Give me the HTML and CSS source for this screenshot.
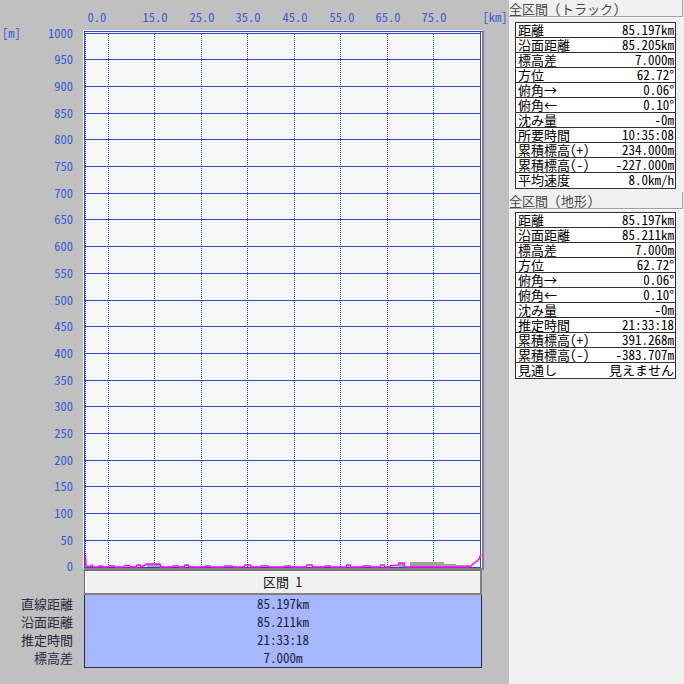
FILE: index.html
```html
<!DOCTYPE html>
<html lang="ja">
<head>
<meta charset="utf-8">
<title>断面図</title>
<link rel="stylesheet" href="styles.css">
</head>
<body>
<div class="app">
  <div class="chart-pane">
    <div class="y-axis">
      <div class="y-tick first"><span>[m]</span><span>1000</span></div>
      <div class="y-tick">950</div>
      <div class="y-tick">900</div>
      <div class="y-tick">850</div>
      <div class="y-tick">800</div>
      <div class="y-tick">750</div>
      <div class="y-tick">700</div>
      <div class="y-tick">650</div>
      <div class="y-tick">600</div>
      <div class="y-tick">550</div>
      <div class="y-tick">500</div>
      <div class="y-tick">450</div>
      <div class="y-tick">400</div>
      <div class="y-tick">350</div>
      <div class="y-tick">300</div>
      <div class="y-tick">250</div>
      <div class="y-tick">200</div>
      <div class="y-tick">150</div>
      <div class="y-tick">100</div>
      <div class="y-tick">50</div>
      <div class="y-tick">0</div>
    </div>
    <div class="x-axis">
      <span class="x-tick" style="left:14px">0.0</span>
      <span class="x-tick" style="left:72px">15.0</span>
      <span class="x-tick" style="left:119px">25.0</span>
      <span class="x-tick" style="left:165px">35.0</span>
      <span class="x-tick" style="left:212px">45.0</span>
      <span class="x-tick" style="left:259px">55.0</span>
      <span class="x-tick" style="left:305px">65.0</span>
      <span class="x-tick" style="left:351px">75.0</span>
      <span class="x-tick" style="left:412px">[km]</span>
    </div>
    <div class="plot">
      <svg width="398" height="537" viewBox="0 0 398 537">
        <g stroke="#2a48c8" stroke-width="1" fill="none">
          <line x1="0" y1="0.5" x2="398" y2="0.5"/>
          <line x1="0.5" y1="0" x2="0.5" y2="537"/>
          <line x1="396.5" y1="0" x2="396.5" y2="537"/>
          <line x1="0" y1="2.5" x2="397" y2="2.5"/>
          <line x1="0" y1="28.5" x2="397" y2="28.5"/>
          <line x1="0" y1="55.5" x2="397" y2="55.5"/>
          <line x1="0" y1="82.5" x2="397" y2="82.5"/>
          <line x1="0" y1="108.5" x2="397" y2="108.5"/>
          <line x1="0" y1="135.5" x2="397" y2="135.5"/>
          <line x1="0" y1="162.5" x2="397" y2="162.5"/>
          <line x1="0" y1="188.5" x2="397" y2="188.5"/>
          <line x1="0" y1="215.5" x2="397" y2="215.5"/>
          <line x1="0" y1="242.5" x2="397" y2="242.5"/>
          <line x1="0" y1="269.5" x2="397" y2="269.5"/>
          <line x1="0" y1="295.5" x2="397" y2="295.5"/>
          <line x1="0" y1="322.5" x2="397" y2="322.5"/>
          <line x1="0" y1="349.5" x2="397" y2="349.5"/>
          <line x1="0" y1="375.5" x2="397" y2="375.5"/>
          <line x1="0" y1="402.5" x2="397" y2="402.5"/>
          <line x1="0" y1="429.5" x2="397" y2="429.5"/>
          <line x1="0" y1="455.5" x2="397" y2="455.5"/>
          <line x1="0" y1="482.5" x2="397" y2="482.5"/>
          <line x1="0" y1="509.5" x2="397" y2="509.5"/>
          <line x1="0" y1="536.5" x2="397" y2="536.5"/>
        </g>
        <g stroke="#2a48c8" stroke-width="1" stroke-dasharray="1 1" fill="none">
          <line x1="1.5" y1="0" x2="1.5" y2="537"/>
          <line x1="24.5" y1="3" x2="24.5" y2="536"/>
          <line x1="70.5" y1="3" x2="70.5" y2="536"/>
          <line x1="117.5" y1="3" x2="117.5" y2="536"/>
          <line x1="163.5" y1="3" x2="163.5" y2="536"/>
          <line x1="210.5" y1="3" x2="210.5" y2="536"/>
          <line x1="256.5" y1="3" x2="256.5" y2="536"/>
          <line x1="303.5" y1="3" x2="303.5" y2="536"/>
          <line x1="349.5" y1="3" x2="349.5" y2="536"/>
        </g>
        <g fill="#a0a0a0">
          <rect x="63" y="533" width="13" height="3"/>
          <rect x="315" y="532" width="5" height="4"/>
          <polygon points="326,536 326,531 360,531 360,533 372,533 372,534 386,534 386,536"/>
        </g>
        <polyline fill="none" stroke="#ff00ff" stroke-width="1.5" points="1,526 1.5,526 2,535 6,536 8,534 9,536 14,536 15,535 18,535 19,536 24,536 25,535 30,535 31,536 40,536 41,534.5 45,534.5 46,536 52,536 53,534 56,534 57,536 63,533 76,533 77,536 88,536 89,535 94,535 95,536 100,536 101,534 104,534 105,536 120,536 121,535 126,535 127,536 140,536 141,535 148,535 149,536 160,536 161,534 166,534 167,536 176,536 177,535 184,535 185,536 200,536 201,535 206,535 207,536 222,536 223,534 228,534 229,536 240,536 241,535 246,535 247,536 262,536 263,534 266,534 267,536 278,536 279,535 286,535 287,536 296,536 297,534 300,534 301,536 306,536 307,534.5 314,534.5 315,532 320,532 321,536 386,536 388,534 390,532 393,530 395,528 397,523"/>
      </svg>
    </div>
    <div class="sec-labels">
      <div>直線距離</div>
      <div>沿面距離</div>
      <div>推定時間</div>
      <div>標高差</div>
    </div>
    <div class="sec-table">
      <div class="sec-head">区間 1</div>
      <div class="sec-body">
        <div>85.197km</div>
        <div>85.211km</div>
        <div>21:33:18</div>
        <div>7.000m</div>
      </div>
    </div>
  </div>
  <div class="info-pane">
    <div class="info-head">全区間 (トラック)</div>
    <div class="info-table">
      <div class="info-row"><span>距離</span><span>85.197km</span></div>
      <div class="info-row"><span>沿面距離</span><span>85.205km</span></div>
      <div class="info-row"><span>標高差</span><span>7.000m</span></div>
      <div class="info-row"><span>方位</span><span>62.72°</span></div>
      <div class="info-row"><span>俯角→</span><span>0.06°</span></div>
      <div class="info-row"><span>俯角←</span><span>0.10°</span></div>
      <div class="info-row"><span>沈み量</span><span>-0m</span></div>
      <div class="info-row"><span>所要時間</span><span>10:35:08</span></div>
      <div class="info-row"><span>累積標高(+)</span><span>234.000m</span></div>
      <div class="info-row"><span>累積標高(-)</span><span>-227.000m</span></div>
      <div class="info-row"><span>平均速度</span><span>8.0km/h</span></div>
    </div>
    <div class="info-head second">全区間 (地形)</div>
    <div class="info-table">
      <div class="info-row"><span>距離</span><span>85.197km</span></div>
      <div class="info-row"><span>沿面距離</span><span>85.211km</span></div>
      <div class="info-row"><span>標高差</span><span>7.000m</span></div>
      <div class="info-row"><span>方位</span><span>62.72°</span></div>
      <div class="info-row"><span>俯角→</span><span>0.06°</span></div>
      <div class="info-row"><span>俯角←</span><span>0.10°</span></div>
      <div class="info-row"><span>沈み量</span><span>-0m</span></div>
      <div class="info-row"><span>推定時間</span><span>21:33:18</span></div>
      <div class="info-row"><span>累積標高(+)</span><span>391.268m</span></div>
      <div class="info-row"><span>累積標高(-)</span><span>-383.707m</span></div>
      <div class="info-row"><span>見通し</span><span>見えません</span></div>
    </div>
  </div>
</div>
</body>
</html>
```

FILE: styles.css
```css
* { box-sizing: border-box; }

html, body {
  margin: 0;
  padding: 0;
  width: 684px;
  height: 684px;
  overflow: hidden;
  font-family: "Noto Sans Mono CJK JP", "Noto Sans CJK JP", "DejaVu Sans Mono", monospace;
  font-size: 13px;
}

.app {
  display: flex;
  width: 684px;
  height: 684px;
}

.chart-pane {
  width: 509px;
  height: 684px;
  background: #c0c0c0;
  display: grid;
  grid-template-columns: 83px 401px 25px;
  grid-template-rows: 30px 540px 1fr;
}

.y-axis {
  grid-column: 1;
  grid-row: 1 / 3;
  padding-top: 19.65px;
  color: #3a58d8;
  font-size: 12.5px;
}

.y-tick {
  height: 26.7px;
  line-height: 26.7px;
  display: flex;
  justify-content: flex-end;
  padding-right: 10px;
}

.y-tick.first {
  justify-content: space-between;
  padding-left: 2px;
}

.x-axis {
  grid-column: 2 / 4;
  grid-row: 1;
  position: relative;
  color: #3a58d8;
  font-size: 12.5px;
}

.x-tick {
  position: absolute;
  top: 8px;
  line-height: 18px;
  transform: translateX(-50%);
  white-space: nowrap;
}

.plot {
  grid-column: 2;
  grid-row: 2;
  background: #f7f7f7;
  border-left: 1px solid #ffffff;
  border-top: 1px solid #ffffff;
  border-right: 2px solid #808080;
  border-bottom: 2px solid #808080;
}

.plot svg {
  display: block;
}

.sec-labels {
  grid-column: 1;
  grid-row: 3;
  padding-top: 25px;
  padding-right: 10px;
  text-align: right;
  color: #2a2a40;
}

.sec-labels div {
  height: 18px;
  line-height: 18px;
}

.sec-table {
  grid-column: 2;
  grid-row: 3;
  margin-left: 1px;
  width: 398px;
}

.sec-head {
  height: 25px;
  line-height: 22px;
  text-align: center;
  background: #f0f0f0;
  border-style: solid;
  border-width: 1px 2px 2px 1px;
  border-color: #6a6a6a #808080 #808080 #6a6a6a;
  box-shadow: inset 1px 1px 0 #ffffff;
  color: #101010;
}

.sec-body {
  background: #a6b6ff;
  border: 1px solid #2c2c48;
  border-top: none;
  color: #1e1e3a;
}

.sec-body div {
  height: 18px;
  line-height: 18px;
  text-align: center;
}

.info-pane {
  flex: 1;
  background: #f0f0f0;
  color: #000;
}

.info-head {
  height: 17px;
  padding-top: 1px;
  line-height: 15px;
  color: #4a4a4a;
  background: #f0f0f0;
  border-right: 1px solid #a0a0a0;
  border-bottom: 1px solid #a0a0a0;
  box-shadow: 0 1px 0 #ffffff;
  margin-right: 1px;
  white-space: nowrap;
}

.info-head.second {
  margin-top: 3px;
}

.info-table {
  margin: 5px 0 0 6px;
  width: 161px;
  border: 1px solid #303030;
  background: #ffffff;
}

.info-head.second + .info-table {
  margin-top: 3px;
}

.info-row {
  display: flex;
  justify-content: space-between;
  height: 15px;
  line-height: 14px;
  padding: 0 1px 0 2px;
  border-bottom: 1px solid #303030;
  white-space: nowrap;
}

.info-row:last-child {
  border-bottom: none;
}
```
